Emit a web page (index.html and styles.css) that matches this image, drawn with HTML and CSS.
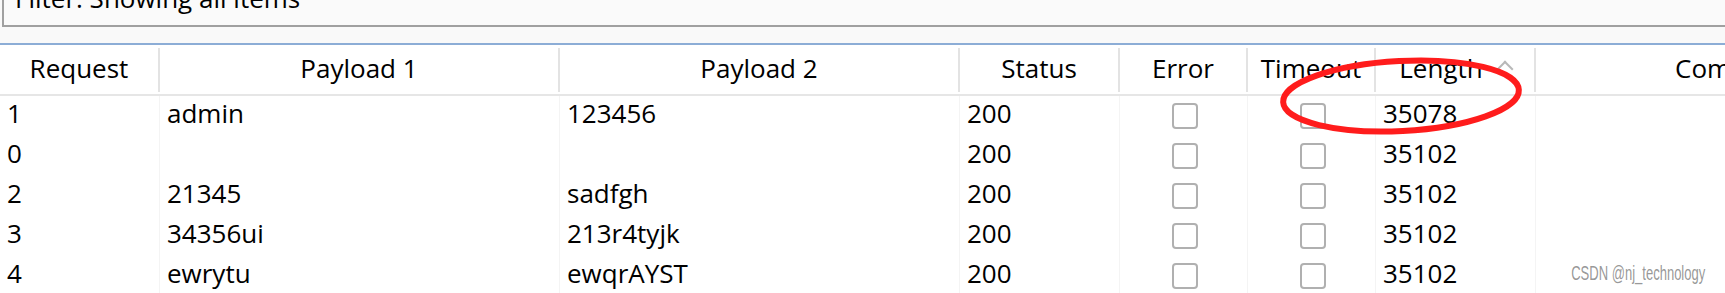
FILE: index.html
```html
<!DOCTYPE html>
<html lang="en">
<head>
  <meta charset="UTF-8">
  <title>Intruder results</title>
  <link rel="stylesheet" href="styles.css">
</head>
<body>

  <div class="filter-bar">
    <div class="filter-box">Filter: Showing all items</div>
  </div>

  <div class="results">
    <div class="row head">
      <div class="cell">Request</div>
      <div class="cell">Payload 1</div>
      <div class="cell">Payload 2</div>
      <div class="cell">Status</div>
      <div class="cell">Error</div>
      <div class="cell">Timeout</div>
      <div class="cell">Length<span class="arrow"></span></div>
      <div class="cell">Comment</div>
    </div>

    <div class="row">
      <div class="cell">1</div>
      <div class="cell">admin</div>
      <div class="cell">123456</div>
      <div class="cell">200</div>
      <div class="cell check"><span class="box"></span></div>
      <div class="cell check"><span class="box"></span></div>
      <div class="cell">35078</div>
      <div class="cell"></div>
    </div>
    <div class="row">
      <div class="cell">0</div>
      <div class="cell"></div>
      <div class="cell"></div>
      <div class="cell">200</div>
      <div class="cell check"><span class="box"></span></div>
      <div class="cell check"><span class="box"></span></div>
      <div class="cell">35102</div>
      <div class="cell"></div>
    </div>
    <div class="row">
      <div class="cell">2</div>
      <div class="cell">21345</div>
      <div class="cell">sadfgh</div>
      <div class="cell">200</div>
      <div class="cell check"><span class="box"></span></div>
      <div class="cell check"><span class="box"></span></div>
      <div class="cell">35102</div>
      <div class="cell"></div>
    </div>
    <div class="row">
      <div class="cell">3</div>
      <div class="cell">34356ui</div>
      <div class="cell">213r4tyjk</div>
      <div class="cell">200</div>
      <div class="cell check"><span class="box"></span></div>
      <div class="cell check"><span class="box"></span></div>
      <div class="cell">35102</div>
      <div class="cell"></div>
    </div>
    <div class="row">
      <div class="cell">4</div>
      <div class="cell">ewrytu</div>
      <div class="cell">ewqrAYST</div>
      <div class="cell">200</div>
      <div class="cell check"><span class="box"></span></div>
      <div class="cell check"><span class="box"></span></div>
      <div class="cell">35102</div>
      <div class="cell"></div>
    </div>
  </div>

  <!-- red marker drawn over the Length column -->
  <svg class="marker" width="260" height="100" viewBox="0 0 260 100">
    <ellipse cx="130" cy="50" rx="118" ry="35" fill="none" stroke="#ff1c1c" stroke-width="6" transform="rotate(-3 130 50)"/>
  </svg>

  <div class="watermark">CSDN @nj_technology</div>

</body>
</html>
```

FILE: styles.css
```css
body {
  margin: 0;
  width: 1725px;
  height: 293px;
  overflow: hidden;
  background: #ffffff;
  font-family: "Open Sans", "Noto Sans", sans-serif;
  font-size: 26px;
  color: #000000;
  position: relative;
}

.filter-bar {
  display: flow-root;
  height: 45px;
  padding-left: 2px;
  background: #f9f9f9;
  border-bottom: 2px solid #8cadd6;
  box-sizing: border-box;
}

.filter-box {
  margin-top: -19px;
  height: 46px;
  line-height: 34px;
  padding-left: 11px;
  background: #fafafa;
  border: 2px solid #a0a0a0;
  border-top: none;
  border-right: none;
  box-sizing: border-box;
}

.results {
  width: 1936px;
}

.row {
  display: grid;
  grid-template-columns: 160px 400px 400px 160px 128px 128px 160px 400px;
  height: 40px;
}

.row .cell {
  line-height: 34px;
  padding-left: 7px;
  white-space: nowrap;
  border-right: 1px solid #f4f4f4;
}

.row.head {
  height: 51px;
  padding: 3px 0 2px;
  box-sizing: border-box;
  border-bottom: 2px solid #e6e6e6;
}

.row.head .cell {
  text-align: center;
  padding: 0 0 4px 0;
  line-height: 40px;
  border-right: 2px solid #e3e3e3;
}

.arrow {
  display: inline-block;
  width: 10px;
  height: 10px;
  border-top: 2px solid #b8b8b8;
  border-left: 2px solid #b8b8b8;
  transform: rotate(45deg);
  margin-left: 16px;
  position: relative;
  top: -3px;
}

.row .check {
  display: flex;
  justify-content: center;
  align-items: center;
  padding-left: 2px;
}

.box {
  width: 22px;
  height: 22px;
  border: 2px solid #b0b0b0;
  border-radius: 4px;
  background: #ffffff;
}

.marker {
  position: absolute;
  left: 1271px;
  top: 46px;
}

.watermark {
  position: absolute;
  right: 20px;
  top: 261px;
  font-family: "Liberation Sans", Arial, sans-serif;
  font-size: 21px;
  color: rgba(125, 125, 125, 0.8);
  transform: scaleX(0.62);
  transform-origin: right center;
}
```
